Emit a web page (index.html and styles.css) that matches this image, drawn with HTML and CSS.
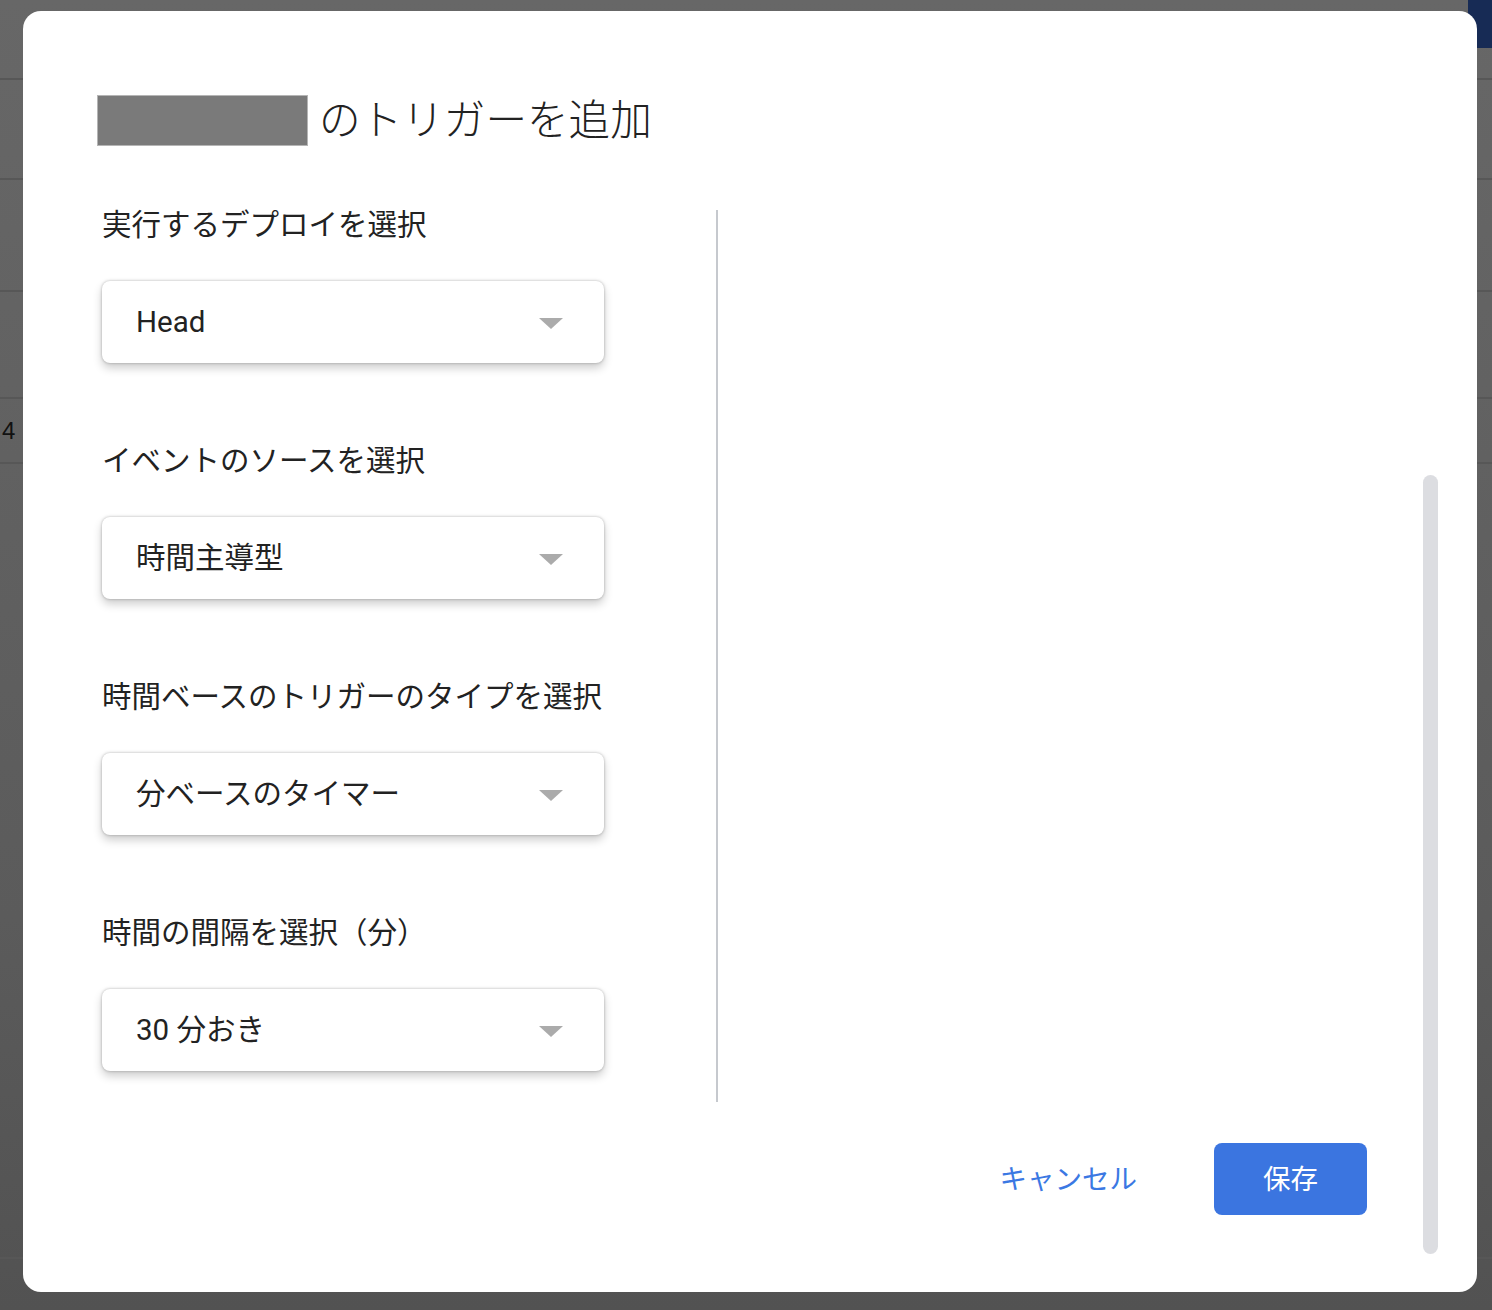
FILE: index.html
```html
<!DOCTYPE html>
<html lang="ja">
<head>
    <meta charset="UTF-8">
    <meta name="viewport" content="width=device-width, initial-scale=1.0">
    <title>トリガーを追加</title>
    <link rel="stylesheet" href="styles.css">
</head>
<body>
    <!-- 背景のページ（オーバーレイで暗くなっている） -->
    <div class="backdrop">
        <div class="bg-row bg-row-1"><span class="top-chip"></span></div>
        <div class="bg-row bg-row-2"></div>
        <div class="bg-row bg-row-3"></div>
        <div class="bg-row bg-row-4"></div>
        <div class="bg-row bg-row-5"><span class="bg-num">4</span></div>
        <div class="bg-row bg-row-6"></div>
    </div>

    <div class="dialog">
        <h1 class="dialog-title">
            <span class="redacted"></span>
            <span class="title-text">のトリガーを追加</span>
        </h1>

        <div class="dialog-body">
            <div class="left-col">
                <div class="field">
                    <div class="field-label">実行するデプロイを選択</div>
                    <div class="dropdown">
                        <span>Head</span>
                        <span class="caret"></span>
                    </div>
                </div>
                <div class="field">
                    <div class="field-label">イベントのソースを選択</div>
                    <div class="dropdown">
                        <span class="value-jp">時間主導型</span>
                        <span class="caret"></span>
                    </div>
                </div>
                <div class="field">
                    <div class="field-label">時間ベースのトリガーのタイプを選択</div>
                    <div class="dropdown">
                        <span class="value-jp">分ベースのタイマー</span>
                        <span class="caret"></span>
                    </div>
                </div>
                <div class="field">
                    <div class="field-label">時間の間隔を選択（分）</div>
                    <div class="dropdown">
                        <span class="value-jp">30 分おき</span>
                        <span class="caret"></span>
                    </div>
                </div>
            </div>
            <div class="right-col"></div>
        </div>

        <div class="dialog-footer">
            <button class="btn-cancel">キャンセル</button>
            <button class="btn-save">保存</button>
        </div>

        <div class="scrollbar"></div>
    </div>
</body>
</html>
```

FILE: styles.css
```css
body {
    margin: 0;
    font-family: Roboto, "Noto Sans CJK JP", sans-serif;
    background: linear-gradient(180deg, #676767, #5b5b5b 70%, #525252);
    min-height: 1310px;
    overflow: hidden;
}
.backdrop {
    display: flex;
    flex-direction: column;
}
.bg-row {
    border-bottom: 2px solid #575757;
    box-sizing: border-box;
    display: flex;
    align-items: center;
}
.bg-row-1 { height: 80px; justify-content: flex-end; align-items: flex-start; }
.bg-row-2 { height: 100px; }
.bg-row-3 { height: 112px; }
.bg-row-4 { height: 107px; }
.bg-row-5 { height: 65px; }
.bg-row-6 { height: 795px; }
.top-chip {
    width: 24px;
    height: 48px;
    background: #172b55;
}
.bg-num {
    font-family: "Liberation Sans", sans-serif;
    font-size: 24px;
    color: #111;
    margin-left: 2px;
}
.dialog {
    position: absolute;
    left: 23px;
    top: 11px;
    width: 1454px;
    height: 1281px;
    background: #fff;
    border-radius: 18px;
    box-sizing: border-box;
    padding-top: 84px;
}
.dialog-title {
    display: flex;
    align-items: center;
    gap: 11px;
    margin: 0 0 0 74px;
    font-family: "Noto Sans CJK JP", sans-serif;
    font-size: 41.6px;
    font-weight: 300;
    color: #222;
    height: 51px;
}
.title-text {
    margin-top: -7px;
}
.redacted {
    width: 209px;
    height: 49px;
    background: #7a7a7a;
    border: 1px solid #b5b5b5;
}
.dialog-body {
    display: flex;
    margin-top: 56px;
    margin-left: 79px;
}
.left-col {
    width: 614px;
    padding-bottom: 31px;
}
.field {
    margin-bottom: 75px;
}
.field:last-child {
    margin-bottom: 0;
}
.field-label {
    font-family: "Noto Sans CJK JP", sans-serif;
    font-size: 29.5px;
    line-height: 40px;
    color: #222;
    margin-bottom: 39px;
}
.dropdown {
    width: 502px;
    height: 82px;
    box-sizing: border-box;
    border-radius: 8px;
    background: #fff;
    display: flex;
    align-items: center;
    justify-content: space-between;
    padding: 0 41px 0 34px;
    font-size: 29.5px;
    color: #222;
    box-shadow: 0 0 3px rgba(0, 0, 0, 0.28), 0 5px 10px rgba(0, 0, 0, 0.2);
}
.value-jp {
    margin-bottom: 6px;
}
.caret {
    width: 0;
    height: 0;
    border-left: 12px solid transparent;
    border-right: 12px solid transparent;
    border-top: 11px solid #ababab;
    margin-top: 2px;
}
.right-col {
    border-left: 2px solid #c6c9ce;
    margin-top: 8px;
}
.dialog-footer {
    display: flex;
    justify-content: flex-end;
    align-items: center;
    gap: 46px;
    margin-top: 41px;
    margin-right: 110px;
}
.dialog-footer button {
    font-family: "Noto Sans CJK JP", sans-serif;
    font-size: 27.5px;
    border: none;
    cursor: pointer;
    height: 72px;
    padding-bottom: 5px;
    border-radius: 8px;
}
.btn-cancel {
    background: none;
    color: #3b78e3;
    padding-left: 31px;
    padding-right: 31px;
}
.btn-save {
    background: #3b75e0;
    color: #fff;
    width: 153px;
}
.scrollbar {
    position: absolute;
    left: 1400px;
    top: 464px;
    width: 15px;
    height: 779px;
    border-radius: 8px;
    background: #dcdde1;
}
```
